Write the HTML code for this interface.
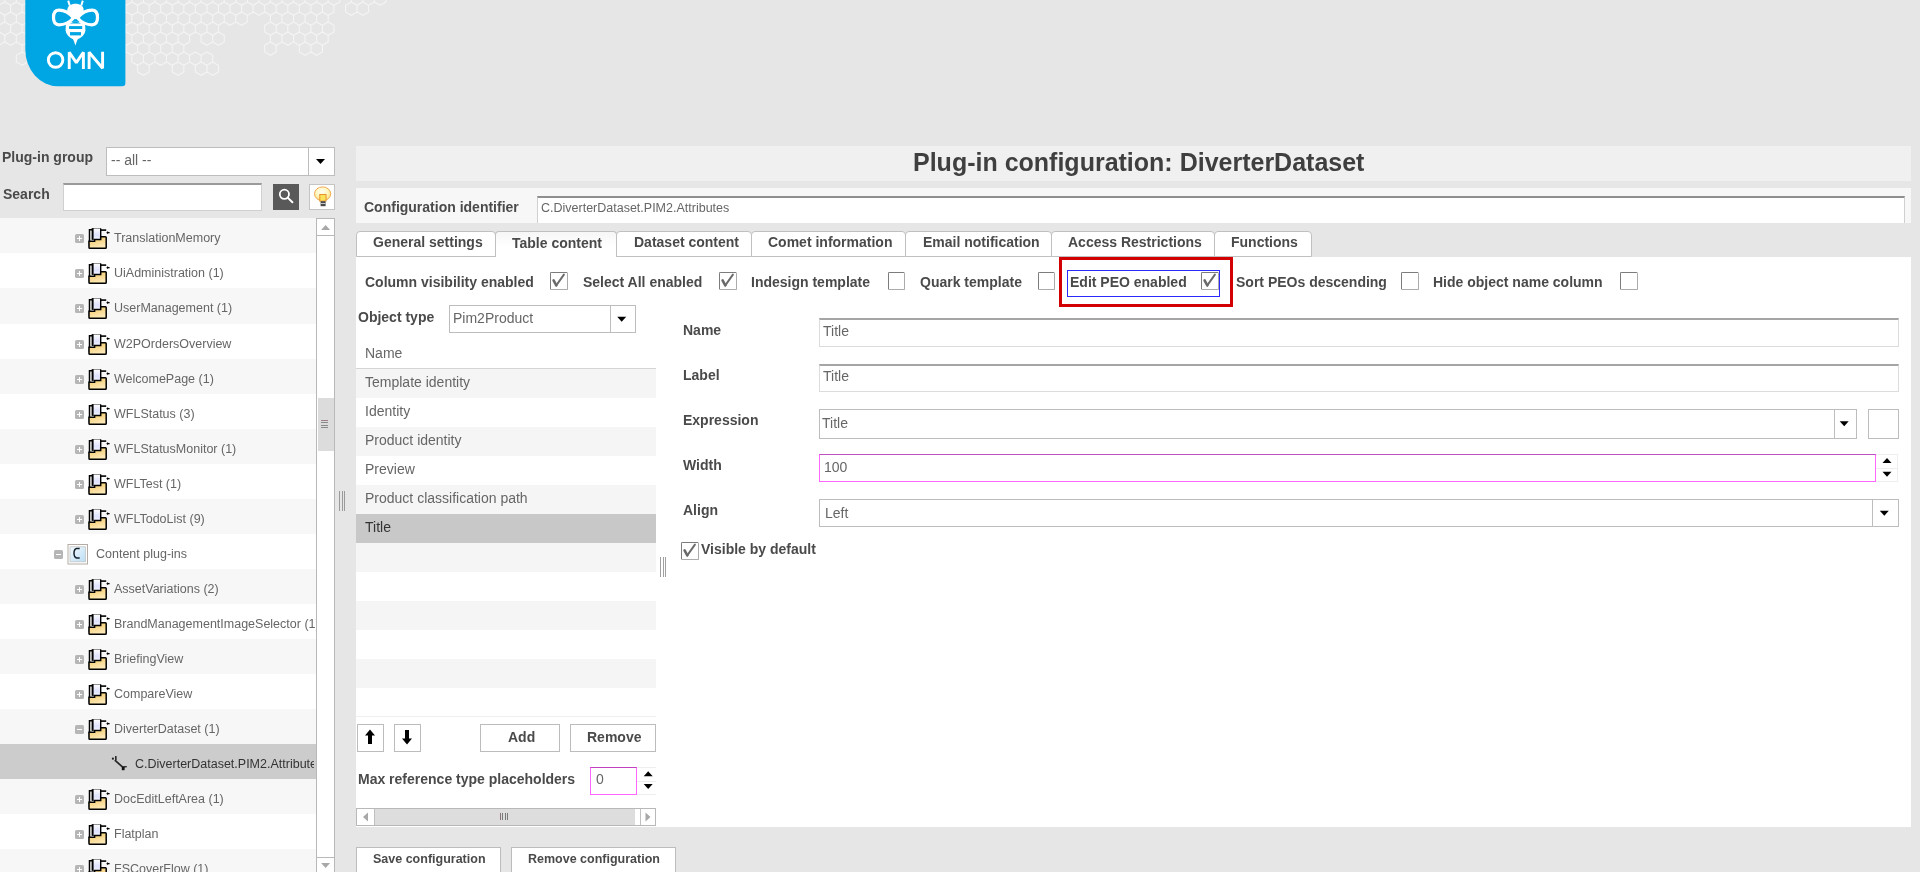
<!DOCTYPE html>
<html><head><meta charset="utf-8"><title>Plug-in configuration</title>
<style>
html,body{margin:0;padding:0;}
body{width:1920px;height:872px;overflow:hidden;position:relative;background:#e6e6e6;font-family:"Liberation Sans",sans-serif;-webkit-font-smoothing:antialiased;}
.a{position:absolute;box-sizing:border-box;}
.t{position:absolute;white-space:nowrap;will-change:transform;}
svg{position:absolute;}
</style></head><body>
<svg style="left:0;top:0" width="400" height="90" viewBox="0 0 400 90"><path d="M-1.00,-8.07 L4.77,-4.74 L4.77,1.93 L-1.00,5.27 L-6.78,1.93 L-6.78,-4.74Z M10.55,-8.07 L16.32,-4.74 L16.32,1.93 L10.55,5.27 L4.77,1.93 L4.77,-4.74Z M22.10,-8.07 L27.87,-4.74 L27.87,1.93 L22.10,5.27 L16.32,1.93 L16.32,-4.74Z M33.65,-8.07 L39.42,-4.74 L39.42,1.93 L33.65,5.27 L27.87,1.93 L27.87,-4.74Z M45.20,-8.07 L50.97,-4.74 L50.97,1.93 L45.20,5.27 L39.42,1.93 L39.42,-4.74Z M56.75,-8.07 L62.52,-4.74 L62.52,1.93 L56.75,5.27 L50.97,1.93 L50.97,-4.74Z M68.30,-8.07 L74.07,-4.74 L74.07,1.93 L68.30,5.27 L62.52,1.93 L62.52,-4.74Z M79.85,-8.07 L85.62,-4.74 L85.62,1.93 L79.85,5.27 L74.07,1.93 L74.07,-4.74Z M91.40,-8.07 L97.17,-4.74 L97.17,1.93 L91.40,5.27 L85.62,1.93 L85.62,-4.74Z M102.95,-8.07 L108.72,-4.74 L108.72,1.93 L102.95,5.27 L97.17,1.93 L97.17,-4.74Z M114.50,-8.07 L120.28,-4.74 L120.28,1.93 L114.50,5.27 L108.72,1.93 L108.72,-4.74Z M126.05,-8.07 L131.82,-4.74 L131.82,1.93 L126.05,5.27 L120.27,1.93 L120.27,-4.74Z M137.60,-8.07 L143.38,-4.74 L143.38,1.93 L137.60,5.27 L131.82,1.93 L131.82,-4.74Z M149.15,-8.07 L154.93,-4.74 L154.93,1.93 L149.15,5.27 L143.38,1.93 L143.38,-4.74Z M160.70,-8.07 L166.47,-4.74 L166.47,1.93 L160.70,5.27 L154.92,1.93 L154.92,-4.74Z M172.25,-8.07 L178.03,-4.74 L178.03,1.93 L172.25,5.27 L166.47,1.93 L166.47,-4.74Z M183.80,-8.07 L189.58,-4.74 L189.58,1.93 L183.80,5.27 L178.03,1.93 L178.03,-4.74Z M195.35,-8.07 L201.12,-4.74 L201.12,1.93 L195.35,5.27 L189.57,1.93 L189.57,-4.74Z M206.90,-8.07 L212.68,-4.74 L212.68,1.93 L206.90,5.27 L201.12,1.93 L201.12,-4.74Z M218.45,-8.07 L224.22,-4.74 L224.22,1.93 L218.45,5.27 L212.67,1.93 L212.67,-4.74Z M230.00,-8.07 L235.78,-4.74 L235.78,1.93 L230.00,5.27 L224.22,1.93 L224.22,-4.74Z M241.55,-8.07 L247.33,-4.74 L247.33,1.93 L241.55,5.27 L235.78,1.93 L235.78,-4.74Z M253.10,-8.07 L258.88,-4.74 L258.88,1.93 L253.10,5.27 L247.32,1.93 L247.32,-4.74Z M264.65,-8.07 L270.42,-4.74 L270.42,1.93 L264.65,5.27 L258.88,1.93 L258.88,-4.74Z M276.20,-8.07 L281.98,-4.74 L281.98,1.93 L276.20,5.27 L270.43,1.93 L270.43,-4.74Z M287.75,-8.07 L293.52,-4.74 L293.52,1.93 L287.75,5.27 L281.98,1.93 L281.98,-4.74Z M299.30,-8.07 L305.07,-4.74 L305.07,1.93 L299.30,5.27 L293.53,1.93 L293.53,-4.74Z M310.85,-8.07 L316.62,-4.74 L316.62,1.93 L310.85,5.27 L305.08,1.93 L305.08,-4.74Z M322.40,-8.07 L328.17,-4.74 L328.17,1.93 L322.40,5.27 L316.62,1.93 L316.62,-4.74Z M333.95,-8.07 L339.73,-4.74 L339.73,1.93 L333.95,5.27 L328.18,1.93 L328.18,-4.74Z M357.05,-8.07 L362.82,-4.74 L362.82,1.93 L357.05,5.27 L351.28,1.93 L351.28,-4.74Z M368.60,-8.07 L374.38,-4.74 L374.38,1.93 L368.60,5.27 L362.83,1.93 L362.83,-4.74Z M380.15,-8.07 L385.92,-4.74 L385.92,1.93 L380.15,5.27 L374.38,1.93 L374.38,-4.74Z M4.80,1.93 L10.57,5.26 L10.57,11.93 L4.80,15.27 L-0.98,11.93 L-0.98,5.26Z M16.35,1.93 L22.12,5.26 L22.12,11.93 L16.35,15.27 L10.57,11.93 L10.57,5.26Z M27.90,1.93 L33.68,5.26 L33.68,11.93 L27.90,15.27 L22.13,11.93 L22.13,5.26Z M39.45,1.93 L45.23,5.26 L45.23,11.93 L39.45,15.27 L33.68,11.93 L33.68,5.26Z M51.00,1.93 L56.77,5.26 L56.77,11.93 L51.00,15.27 L45.23,11.93 L45.23,5.26Z M62.55,1.93 L68.33,5.26 L68.33,11.93 L62.55,15.27 L56.77,11.93 L56.77,5.26Z M74.10,1.93 L79.88,5.26 L79.88,11.93 L74.10,15.27 L68.32,11.93 L68.32,5.26Z M85.65,1.93 L91.43,5.26 L91.43,11.93 L85.65,15.27 L79.88,11.93 L79.88,5.26Z M97.20,1.93 L102.98,5.26 L102.98,11.93 L97.20,15.27 L91.42,11.93 L91.42,5.26Z M108.75,1.93 L114.53,5.26 L114.53,11.93 L108.75,15.27 L102.97,11.93 L102.97,5.26Z M120.30,1.93 L126.08,5.26 L126.08,11.93 L120.30,15.27 L114.53,11.93 L114.53,5.26Z M131.85,1.93 L137.62,5.26 L137.62,11.93 L131.85,15.27 L126.07,11.93 L126.07,5.26Z M143.40,1.93 L149.18,5.26 L149.18,11.93 L143.40,15.27 L137.62,11.93 L137.62,5.26Z M154.95,1.93 L160.73,5.26 L160.73,11.93 L154.95,15.27 L149.18,11.93 L149.18,5.26Z M166.50,1.93 L172.28,5.26 L172.28,11.93 L166.50,15.27 L160.72,11.93 L160.72,5.26Z M178.05,1.93 L183.83,5.26 L183.83,11.93 L178.05,15.27 L172.28,11.93 L172.28,5.26Z M189.60,1.93 L195.38,5.26 L195.38,11.93 L189.60,15.27 L183.83,11.93 L183.83,5.26Z M201.15,1.93 L206.93,5.26 L206.93,11.93 L201.15,15.27 L195.38,11.93 L195.38,5.26Z M212.70,1.93 L218.48,5.26 L218.48,11.93 L212.70,15.27 L206.93,11.93 L206.93,5.26Z M224.25,1.93 L230.03,5.26 L230.03,11.93 L224.25,15.27 L218.47,11.93 L218.47,5.26Z M235.80,1.93 L241.58,5.26 L241.58,11.93 L235.80,15.27 L230.03,11.93 L230.03,5.26Z M247.35,1.93 L253.13,5.26 L253.13,11.93 L247.35,15.27 L241.58,11.93 L241.58,5.26Z M258.90,1.93 L264.67,5.26 L264.67,11.93 L258.90,15.27 L253.12,11.93 L253.12,5.26Z M270.45,1.93 L276.23,5.26 L276.23,11.93 L270.45,15.27 L264.68,11.93 L264.68,5.26Z M282.00,1.93 L287.77,5.26 L287.77,11.93 L282.00,15.27 L276.23,11.93 L276.23,5.26Z M293.55,1.93 L299.32,5.26 L299.32,11.93 L293.55,15.27 L287.78,11.93 L287.78,5.26Z M305.10,1.93 L310.88,5.26 L310.88,11.93 L305.10,15.27 L299.33,11.93 L299.33,5.26Z M316.65,1.93 L322.42,5.26 L322.42,11.93 L316.65,15.27 L310.88,11.93 L310.88,5.26Z M328.20,1.93 L333.98,5.26 L333.98,11.93 L328.20,15.27 L322.43,11.93 L322.43,5.26Z M351.30,1.93 L357.07,5.26 L357.07,11.93 L351.30,15.27 L345.53,11.93 L345.53,5.26Z M362.85,1.93 L368.62,5.26 L368.62,11.93 L362.85,15.27 L357.08,11.93 L357.08,5.26Z M-1.00,11.93 L4.77,15.27 L4.77,21.94 L-1.00,25.27 L-6.78,21.94 L-6.78,15.27Z M10.55,11.93 L16.32,15.27 L16.32,21.94 L10.55,25.27 L4.77,21.94 L4.77,15.27Z M22.10,11.93 L27.87,15.27 L27.87,21.94 L22.10,25.27 L16.32,21.94 L16.32,15.27Z M33.65,11.93 L39.42,15.27 L39.42,21.94 L33.65,25.27 L27.87,21.94 L27.87,15.27Z M45.20,11.93 L50.97,15.27 L50.97,21.94 L45.20,25.27 L39.42,21.94 L39.42,15.27Z M56.75,11.93 L62.52,15.27 L62.52,21.94 L56.75,25.27 L50.97,21.94 L50.97,15.27Z M68.30,11.93 L74.07,15.27 L74.07,21.94 L68.30,25.27 L62.52,21.94 L62.52,15.27Z M79.85,11.93 L85.62,15.27 L85.62,21.94 L79.85,25.27 L74.07,21.94 L74.07,15.27Z M91.40,11.93 L97.17,15.27 L97.17,21.94 L91.40,25.27 L85.62,21.94 L85.62,15.27Z M102.95,11.93 L108.72,15.27 L108.72,21.94 L102.95,25.27 L97.17,21.94 L97.17,15.27Z M114.50,11.93 L120.28,15.27 L120.28,21.94 L114.50,25.27 L108.72,21.94 L108.72,15.27Z M126.05,11.93 L131.82,15.27 L131.82,21.94 L126.05,25.27 L120.27,21.94 L120.27,15.27Z M137.60,11.93 L143.38,15.27 L143.38,21.94 L137.60,25.27 L131.82,21.94 L131.82,15.27Z M149.15,11.93 L154.93,15.27 L154.93,21.94 L149.15,25.27 L143.38,21.94 L143.38,15.27Z M160.70,11.93 L166.47,15.27 L166.47,21.94 L160.70,25.27 L154.92,21.94 L154.92,15.27Z M172.25,11.93 L178.03,15.27 L178.03,21.94 L172.25,25.27 L166.47,21.94 L166.47,15.27Z M183.80,11.93 L189.58,15.27 L189.58,21.94 L183.80,25.27 L178.03,21.94 L178.03,15.27Z M195.35,11.93 L201.12,15.27 L201.12,21.94 L195.35,25.27 L189.57,21.94 L189.57,15.27Z M206.90,11.93 L212.68,15.27 L212.68,21.94 L206.90,25.27 L201.12,21.94 L201.12,15.27Z M218.45,11.93 L224.22,15.27 L224.22,21.94 L218.45,25.27 L212.67,21.94 L212.67,15.27Z M230.00,11.93 L235.78,15.27 L235.78,21.94 L230.00,25.27 L224.22,21.94 L224.22,15.27Z M241.55,11.93 L247.33,15.27 L247.33,21.94 L241.55,25.27 L235.78,21.94 L235.78,15.27Z M276.20,11.93 L281.98,15.27 L281.98,21.94 L276.20,25.27 L270.43,21.94 L270.43,15.27Z M287.75,11.93 L293.52,15.27 L293.52,21.94 L287.75,25.27 L281.98,21.94 L281.98,15.27Z M299.30,11.93 L305.07,15.27 L305.07,21.94 L299.30,25.27 L293.53,21.94 L293.53,15.27Z M310.85,11.93 L316.62,15.27 L316.62,21.94 L310.85,25.27 L305.08,21.94 L305.08,15.27Z M322.40,11.93 L328.17,15.27 L328.17,21.94 L322.40,25.27 L316.62,21.94 L316.62,15.27Z M4.80,21.93 L10.57,25.27 L10.57,31.94 L4.80,35.27 L-0.98,31.94 L-0.98,25.27Z M16.35,21.93 L22.12,25.27 L22.12,31.94 L16.35,35.27 L10.57,31.94 L10.57,25.27Z M27.90,21.93 L33.68,25.27 L33.68,31.94 L27.90,35.27 L22.13,31.94 L22.13,25.27Z M39.45,21.93 L45.23,25.27 L45.23,31.94 L39.45,35.27 L33.68,31.94 L33.68,25.27Z M51.00,21.93 L56.77,25.27 L56.77,31.94 L51.00,35.27 L45.23,31.94 L45.23,25.27Z M62.55,21.93 L68.33,25.27 L68.33,31.94 L62.55,35.27 L56.77,31.94 L56.77,25.27Z M74.10,21.93 L79.88,25.27 L79.88,31.94 L74.10,35.27 L68.32,31.94 L68.32,25.27Z M85.65,21.93 L91.43,25.27 L91.43,31.94 L85.65,35.27 L79.88,31.94 L79.88,25.27Z M97.20,21.93 L102.98,25.27 L102.98,31.94 L97.20,35.27 L91.42,31.94 L91.42,25.27Z M108.75,21.93 L114.53,25.27 L114.53,31.94 L108.75,35.27 L102.97,31.94 L102.97,25.27Z M120.30,21.93 L126.08,25.27 L126.08,31.94 L120.30,35.27 L114.53,31.94 L114.53,25.27Z M131.85,21.93 L137.62,25.27 L137.62,31.94 L131.85,35.27 L126.07,31.94 L126.07,25.27Z M143.40,21.93 L149.18,25.27 L149.18,31.94 L143.40,35.27 L137.62,31.94 L137.62,25.27Z M154.95,21.93 L160.73,25.27 L160.73,31.94 L154.95,35.27 L149.18,31.94 L149.18,25.27Z M166.50,21.93 L172.28,25.27 L172.28,31.94 L166.50,35.27 L160.72,31.94 L160.72,25.27Z M178.05,21.93 L183.83,25.27 L183.83,31.94 L178.05,35.27 L172.28,31.94 L172.28,25.27Z M189.60,21.93 L195.38,25.27 L195.38,31.94 L189.60,35.27 L183.83,31.94 L183.83,25.27Z M201.15,21.93 L206.93,25.27 L206.93,31.94 L201.15,35.27 L195.38,31.94 L195.38,25.27Z M212.70,21.93 L218.48,25.27 L218.48,31.94 L212.70,35.27 L206.93,31.94 L206.93,25.27Z M270.45,21.93 L276.23,25.27 L276.23,31.94 L270.45,35.27 L264.68,31.94 L264.68,25.27Z M282.00,21.93 L287.77,25.27 L287.77,31.94 L282.00,35.27 L276.23,31.94 L276.23,25.27Z M293.55,21.93 L299.32,25.27 L299.32,31.94 L293.55,35.27 L287.78,31.94 L287.78,25.27Z M305.10,21.93 L310.88,25.27 L310.88,31.94 L305.10,35.27 L299.33,31.94 L299.33,25.27Z M316.65,21.93 L322.42,25.27 L322.42,31.94 L316.65,35.27 L310.88,31.94 L310.88,25.27Z M328.20,21.93 L333.98,25.27 L333.98,31.94 L328.20,35.27 L322.43,31.94 L322.43,25.27Z M-1.00,31.93 L4.77,35.27 L4.77,41.94 L-1.00,45.27 L-6.78,41.94 L-6.78,35.27Z M10.55,31.93 L16.32,35.27 L16.32,41.94 L10.55,45.27 L4.77,41.94 L4.77,35.27Z M22.10,31.93 L27.87,35.27 L27.87,41.94 L22.10,45.27 L16.32,41.94 L16.32,35.27Z M33.65,31.93 L39.42,35.27 L39.42,41.94 L33.65,45.27 L27.87,41.94 L27.87,35.27Z M45.20,31.93 L50.97,35.27 L50.97,41.94 L45.20,45.27 L39.42,41.94 L39.42,35.27Z M56.75,31.93 L62.52,35.27 L62.52,41.94 L56.75,45.27 L50.97,41.94 L50.97,35.27Z M68.30,31.93 L74.07,35.27 L74.07,41.94 L68.30,45.27 L62.52,41.94 L62.52,35.27Z M79.85,31.93 L85.62,35.27 L85.62,41.94 L79.85,45.27 L74.07,41.94 L74.07,35.27Z M91.40,31.93 L97.17,35.27 L97.17,41.94 L91.40,45.27 L85.62,41.94 L85.62,35.27Z M102.95,31.93 L108.72,35.27 L108.72,41.94 L102.95,45.27 L97.17,41.94 L97.17,35.27Z M114.50,31.93 L120.28,35.27 L120.28,41.94 L114.50,45.27 L108.72,41.94 L108.72,35.27Z M126.05,31.93 L131.82,35.27 L131.82,41.94 L126.05,45.27 L120.27,41.94 L120.27,35.27Z M137.60,31.93 L143.38,35.27 L143.38,41.94 L137.60,45.27 L131.82,41.94 L131.82,35.27Z M149.15,31.93 L154.93,35.27 L154.93,41.94 L149.15,45.27 L143.38,41.94 L143.38,35.27Z M160.70,31.93 L166.47,35.27 L166.47,41.94 L160.70,45.27 L154.92,41.94 L154.92,35.27Z M172.25,31.93 L178.03,35.27 L178.03,41.94 L172.25,45.27 L166.47,41.94 L166.47,35.27Z M183.80,31.93 L189.58,35.27 L189.58,41.94 L183.80,45.27 L178.03,41.94 L178.03,35.27Z M206.90,31.93 L212.68,35.27 L212.68,41.94 L206.90,45.27 L201.12,41.94 L201.12,35.27Z M218.45,31.93 L224.22,35.27 L224.22,41.94 L218.45,45.27 L212.67,41.94 L212.67,35.27Z M276.20,31.93 L281.98,35.27 L281.98,41.94 L276.20,45.27 L270.43,41.94 L270.43,35.27Z M287.75,31.93 L293.52,35.27 L293.52,41.94 L287.75,45.27 L281.98,41.94 L281.98,35.27Z M299.30,31.93 L305.07,35.27 L305.07,41.94 L299.30,45.27 L293.53,41.94 L293.53,35.27Z M310.85,31.93 L316.62,35.27 L316.62,41.94 L310.85,45.27 L305.08,41.94 L305.08,35.27Z M322.40,31.93 L328.17,35.27 L328.17,41.94 L322.40,45.27 L316.62,41.94 L316.62,35.27Z M27.90,41.93 L33.68,45.27 L33.68,51.94 L27.90,55.27 L22.13,51.94 L22.13,45.27Z M39.45,41.93 L45.23,45.27 L45.23,51.94 L39.45,55.27 L33.68,51.94 L33.68,45.27Z M51.00,41.93 L56.77,45.27 L56.77,51.94 L51.00,55.27 L45.23,51.94 L45.23,45.27Z M62.55,41.93 L68.33,45.27 L68.33,51.94 L62.55,55.27 L56.77,51.94 L56.77,45.27Z M74.10,41.93 L79.88,45.27 L79.88,51.94 L74.10,55.27 L68.32,51.94 L68.32,45.27Z M85.65,41.93 L91.43,45.27 L91.43,51.94 L85.65,55.27 L79.88,51.94 L79.88,45.27Z M97.20,41.93 L102.98,45.27 L102.98,51.94 L97.20,55.27 L91.42,51.94 L91.42,45.27Z M108.75,41.93 L114.53,45.27 L114.53,51.94 L108.75,55.27 L102.97,51.94 L102.97,45.27Z M120.30,41.93 L126.08,45.27 L126.08,51.94 L120.30,55.27 L114.53,51.94 L114.53,45.27Z M131.85,41.93 L137.62,45.27 L137.62,51.94 L131.85,55.27 L126.07,51.94 L126.07,45.27Z M143.40,41.93 L149.18,45.27 L149.18,51.94 L143.40,55.27 L137.62,51.94 L137.62,45.27Z M154.95,41.93 L160.73,45.27 L160.73,51.94 L154.95,55.27 L149.18,51.94 L149.18,45.27Z M166.50,41.93 L172.28,45.27 L172.28,51.94 L166.50,55.27 L160.72,51.94 L160.72,45.27Z M178.05,41.93 L183.83,45.27 L183.83,51.94 L178.05,55.27 L172.28,51.94 L172.28,45.27Z M270.45,41.93 L276.23,45.27 L276.23,51.94 L270.45,55.27 L264.68,51.94 L264.68,45.27Z M305.10,41.93 L310.88,45.27 L310.88,51.94 L305.10,55.27 L299.33,51.94 L299.33,45.27Z M316.65,41.93 L322.42,45.27 L322.42,51.94 L316.65,55.27 L310.88,51.94 L310.88,45.27Z M22.10,51.93 L27.87,55.27 L27.87,61.94 L22.10,65.27 L16.32,61.94 L16.32,55.27Z M137.60,51.93 L143.38,55.27 L143.38,61.94 L137.60,65.27 L131.82,61.94 L131.82,55.27Z M149.15,51.93 L154.93,55.27 L154.93,61.94 L149.15,65.27 L143.38,61.94 L143.38,55.27Z M160.70,51.93 L166.47,55.27 L166.47,61.94 L160.70,65.27 L154.92,61.94 L154.92,55.27Z M172.25,51.93 L178.03,55.27 L178.03,61.94 L172.25,65.27 L166.47,61.94 L166.47,55.27Z M183.80,51.93 L189.58,55.27 L189.58,61.94 L183.80,65.27 L178.03,61.94 L178.03,55.27Z M195.35,51.93 L201.12,55.27 L201.12,61.94 L195.35,65.27 L189.57,61.94 L189.57,55.27Z M206.90,51.93 L212.68,55.27 L212.68,61.94 L206.90,65.27 L201.12,61.94 L201.12,55.27Z M143.40,61.93 L149.18,65.27 L149.18,71.93 L143.40,75.27 L137.62,71.93 L137.62,65.27Z M178.05,61.93 L183.83,65.27 L183.83,71.93 L178.05,75.27 L172.28,71.93 L172.28,65.27Z M201.15,61.93 L206.93,65.27 L206.93,71.93 L201.15,75.27 L195.38,71.93 L195.38,65.27Z M212.70,61.93 L218.48,65.27 L218.48,71.93 L212.70,75.27 L206.93,71.93 L206.93,65.27Z" fill="none" stroke="#f4f4f4" stroke-width="1.1"/></svg>
<svg style="left:25px;top:0" width="101" height="88" viewBox="0 0 101 88"><path d="M0.3,0 H100.4 V83 Q100.4,86.3 97.2,86.3 H33 A32.7,36.8 0 0 1 0.3,49.5 Z" fill="#00a6e3"/><g fill="none" stroke="#fff" stroke-width="3.2"><path d="M48.5,18 C44,12.5 39,10.2 34,10.2 C30,10.2 28.5,13.5 28.5,17.5 C28.5,21.5 30,24.8 34,24.8 C39,24.8 44,23 48.5,18 Z"/><path d="M52.5,18 C57,12.5 62,10.2 67,10.2 C71,10.2 72.5,13.5 72.5,17.5 C72.5,21.5 71,24.8 67,24.8 C62,24.8 57,23 52.5,18 Z"/></g><path d="M42.3,10.5 C42.3,5.8 46,3.8 50.5,3.8 C55,3.8 58.7,5.8 58.7,10.5 C58.7,13.5 55,16.5 50.5,19.2 C46,16.5 42.3,13.5 42.3,10.5 Z" fill="#fff"/><path d="M44.7,5.5 L43.2,0.6 M56.3,5.5 L57.8,0.6" stroke="#fff" stroke-width="2"/><path d="M40.9,23 Q50.5,20.5 60.1,23 L60.4,30.5 Q60,36.5 50.4,40.5 Q41,36.5 40.6,30.5 Z" fill="#fff"/><path d="M45,23.6 Q50.5,19.8 56,23.6 Z" fill="#00a6e3"/><rect x="44.1" y="26.1" width="13.1" height="2.9" fill="#00a6e3"/><rect x="45" y="32.1" width="11" height="3.3" fill="#00a6e3"/><path d="M48.1,39 L52.7,39 L50.4,45.5 Z" fill="#fff"/><g fill="none" stroke="#fff" stroke-width="2.9"><ellipse cx="30.6" cy="60" rx="7.25" ry="7.3"/><path d="M44.25,69 V52.3 L51.3,62.6 L58.4,52.3 V69" stroke-linejoin="bevel"/><path d="M64.1,69 V52.3 L77.6,68.2 V51.8" stroke-linejoin="bevel"/></g></svg>
<div class="t" style="left:2.20px;top:150.15px;font-size:14px;line-height:14px;font-weight:bold;color:#4a4a4a;">Plug-in group</div>
<div class="a" style="left:106px;top:147px;width:229px;height:29px;background:#fff;border:1px solid #bdbdbd;"></div>
<div class="a" style="left:308px;top:147px;width:1px;height:29px;background:#bdbdbd;"></div>
<svg style="left:315px;top:158px" width="12" height="8"><polygon points="1.00,1.00 10.00,1.00 5.50,6.00" fill="#000"/></svg>
<div class="t" style="left:111.20px;top:153.35px;font-size:14px;line-height:14px;color:#666;">-- all --</div>
<div class="t" style="left:2.70px;top:186.95px;font-size:14px;line-height:14px;font-weight:bold;color:#4a4a4a;">Search</div>
<div class="a" style="left:63px;top:183px;width:199px;height:28px;background:#fff;border:1px solid #d0d0d0;border-top:2px solid #9a9a9a;"></div>
<div class="a" style="left:273px;top:184px;width:26px;height:26px;background:#595959;"></div>
<svg style="left:272px;top:183px" width="27" height="27" viewBox="0 0 27 27"><circle cx="12.4" cy="11.3" r="4.6" fill="none" stroke="#fff" stroke-width="1.8"/><path d="M15.7,14.6 L20.4,19.3" stroke="#fff" stroke-width="2" stroke-linecap="round"/></svg>
<div class="a" style="left:309px;top:184px;width:26px;height:26px;background:#fff;border:1px solid #c4c4c4;"></div>
<svg style="left:309px;top:183px" width="26" height="27" viewBox="0 0 26 27"><defs><radialGradient id="bg1" cx="0.45" cy="0.35" r="0.65"><stop offset="0" stop-color="#fffff4"/><stop offset="0.55" stop-color="#fff6c0"/><stop offset="1" stop-color="#fbe37a"/></radialGradient></defs><ellipse cx="13.6" cy="10.8" rx="8.1" ry="6.9" fill="url(#bg1)" stroke="#f0a850" stroke-width="1"/><rect x="10.8" y="11.5" width="6.2" height="6.6" fill="#f9e35a" stroke="#e8902c" stroke-width="1"/><rect x="11.6" y="18.2" width="5" height="5" fill="#4a4a4a"/><rect x="11.6" y="20" width="5" height="1" fill="#c8c8c8"/></svg>
<div class="a" style="left:0px;top:218px;width:316px;height:35px;background:#f7f7f7;"></div>
<div class="a" style="left:75px;top:234px;width:9px;height:9px;background:#b6b6b6;border-radius:1.5px;"></div>
<div class="a" style="left:77px;top:238px;width:5px;height:1px;background:#fff;"></div>
<div class="a" style="left:79px;top:236px;width:1px;height:5px;background:#fff;"></div>
<svg style="left:88px;top:227px" width="23" height="23" viewBox="0 0 23 23"><defs><linearGradient id="fg0" x1="0" y1="0" x2="0.4" y2="1"><stop offset="0" stop-color="#f0c45c"/><stop offset="1" stop-color="#fde9b8"/></linearGradient><linearGradient id="pg0" x1="0" y1="0" x2="0" y2="1"><stop offset="0" stop-color="#fff"/><stop offset="0.6" stop-color="#dfe2ff"/><stop offset="1" stop-color="#f4f4ff"/></linearGradient></defs><path d="M1.5,19 V2.8 H4.5" fill="#fff" stroke="#000" stroke-width="1.5"/><rect x="4.6" y="1.4" width="8" height="11.2" fill="url(#pg0)" stroke="#777" stroke-width="0.8"/><path d="M4.6,1.2 V12.8" stroke="#000" stroke-width="2"/><path d="M12.7,1.6 V12.6" stroke="#000" stroke-width="1.4"/><path d="M12.3,3.1 H18.2" stroke="#000" stroke-width="1.6"/><path d="M18.6,5.6 L21.6,5.6 M19.6,4.4 L19.6,6.8" stroke="#000" stroke-width="1.1"/><path d="M1,14.3 H6.6 V12.6 H12.7 V9.8 H17.4 Q18.2,9.8 18.2,10.6 V20.4 Q18.2,21.3 17.4,21.3 H1.8 Q1,21.3 1,20.4 Z" fill="url(#fg0)" stroke="#000" stroke-width="1.5"/></svg>
<div class="t" style="left:114.00px;top:232.42px;font-size:12.5px;line-height:12.5px;color:#666;">TranslationMemory</div>
<div class="a" style="left:0px;top:253px;width:316px;height:35px;background:#ffffff;"></div>
<div class="a" style="left:75px;top:269px;width:9px;height:9px;background:#b6b6b6;border-radius:1.5px;"></div>
<div class="a" style="left:77px;top:273px;width:5px;height:1px;background:#fff;"></div>
<div class="a" style="left:79px;top:271px;width:1px;height:5px;background:#fff;"></div>
<svg style="left:88px;top:262px" width="23" height="23" viewBox="0 0 23 23"><defs><linearGradient id="fg1" x1="0" y1="0" x2="0.4" y2="1"><stop offset="0" stop-color="#f0c45c"/><stop offset="1" stop-color="#fde9b8"/></linearGradient><linearGradient id="pg1" x1="0" y1="0" x2="0" y2="1"><stop offset="0" stop-color="#fff"/><stop offset="0.6" stop-color="#dfe2ff"/><stop offset="1" stop-color="#f4f4ff"/></linearGradient></defs><path d="M1.5,19 V2.8 H4.5" fill="#fff" stroke="#000" stroke-width="1.5"/><rect x="4.6" y="1.4" width="8" height="11.2" fill="url(#pg1)" stroke="#777" stroke-width="0.8"/><path d="M4.6,1.2 V12.8" stroke="#000" stroke-width="2"/><path d="M12.7,1.6 V12.6" stroke="#000" stroke-width="1.4"/><path d="M12.3,3.1 H18.2" stroke="#000" stroke-width="1.6"/><path d="M18.6,5.6 L21.6,5.6 M19.6,4.4 L19.6,6.8" stroke="#000" stroke-width="1.1"/><path d="M1,14.3 H6.6 V12.6 H12.7 V9.8 H17.4 Q18.2,9.8 18.2,10.6 V20.4 Q18.2,21.3 17.4,21.3 H1.8 Q1,21.3 1,20.4 Z" fill="url(#fg1)" stroke="#000" stroke-width="1.5"/></svg>
<div class="t" style="left:114.00px;top:267.42px;font-size:12.5px;line-height:12.5px;color:#666;">UiAdministration (1)</div>
<div class="a" style="left:0px;top:288px;width:316px;height:36px;background:#f7f7f7;"></div>
<div class="a" style="left:75px;top:304px;width:9px;height:9px;background:#b6b6b6;border-radius:1.5px;"></div>
<div class="a" style="left:77px;top:308px;width:5px;height:1px;background:#fff;"></div>
<div class="a" style="left:79px;top:306px;width:1px;height:5px;background:#fff;"></div>
<svg style="left:88px;top:297px" width="23" height="23" viewBox="0 0 23 23"><defs><linearGradient id="fg2" x1="0" y1="0" x2="0.4" y2="1"><stop offset="0" stop-color="#f0c45c"/><stop offset="1" stop-color="#fde9b8"/></linearGradient><linearGradient id="pg2" x1="0" y1="0" x2="0" y2="1"><stop offset="0" stop-color="#fff"/><stop offset="0.6" stop-color="#dfe2ff"/><stop offset="1" stop-color="#f4f4ff"/></linearGradient></defs><path d="M1.5,19 V2.8 H4.5" fill="#fff" stroke="#000" stroke-width="1.5"/><rect x="4.6" y="1.4" width="8" height="11.2" fill="url(#pg2)" stroke="#777" stroke-width="0.8"/><path d="M4.6,1.2 V12.8" stroke="#000" stroke-width="2"/><path d="M12.7,1.6 V12.6" stroke="#000" stroke-width="1.4"/><path d="M12.3,3.1 H18.2" stroke="#000" stroke-width="1.6"/><path d="M18.6,5.6 L21.6,5.6 M19.6,4.4 L19.6,6.8" stroke="#000" stroke-width="1.1"/><path d="M1,14.3 H6.6 V12.6 H12.7 V9.8 H17.4 Q18.2,9.8 18.2,10.6 V20.4 Q18.2,21.3 17.4,21.3 H1.8 Q1,21.3 1,20.4 Z" fill="url(#fg2)" stroke="#000" stroke-width="1.5"/></svg>
<div class="t" style="left:114.00px;top:302.42px;font-size:12.5px;line-height:12.5px;color:#666;">UserManagement (1)</div>
<div class="a" style="left:0px;top:324px;width:316px;height:35px;background:#ffffff;"></div>
<div class="a" style="left:75px;top:340px;width:9px;height:9px;background:#b6b6b6;border-radius:1.5px;"></div>
<div class="a" style="left:77px;top:344px;width:5px;height:1px;background:#fff;"></div>
<div class="a" style="left:79px;top:342px;width:1px;height:5px;background:#fff;"></div>
<svg style="left:88px;top:333px" width="23" height="23" viewBox="0 0 23 23"><defs><linearGradient id="fg3" x1="0" y1="0" x2="0.4" y2="1"><stop offset="0" stop-color="#f0c45c"/><stop offset="1" stop-color="#fde9b8"/></linearGradient><linearGradient id="pg3" x1="0" y1="0" x2="0" y2="1"><stop offset="0" stop-color="#fff"/><stop offset="0.6" stop-color="#dfe2ff"/><stop offset="1" stop-color="#f4f4ff"/></linearGradient></defs><path d="M1.5,19 V2.8 H4.5" fill="#fff" stroke="#000" stroke-width="1.5"/><rect x="4.6" y="1.4" width="8" height="11.2" fill="url(#pg3)" stroke="#777" stroke-width="0.8"/><path d="M4.6,1.2 V12.8" stroke="#000" stroke-width="2"/><path d="M12.7,1.6 V12.6" stroke="#000" stroke-width="1.4"/><path d="M12.3,3.1 H18.2" stroke="#000" stroke-width="1.6"/><path d="M18.6,5.6 L21.6,5.6 M19.6,4.4 L19.6,6.8" stroke="#000" stroke-width="1.1"/><path d="M1,14.3 H6.6 V12.6 H12.7 V9.8 H17.4 Q18.2,9.8 18.2,10.6 V20.4 Q18.2,21.3 17.4,21.3 H1.8 Q1,21.3 1,20.4 Z" fill="url(#fg3)" stroke="#000" stroke-width="1.5"/></svg>
<div class="t" style="left:114.00px;top:338.42px;font-size:12.5px;line-height:12.5px;color:#666;">W2POrdersOverview</div>
<div class="a" style="left:0px;top:359px;width:316px;height:35px;background:#f7f7f7;"></div>
<div class="a" style="left:75px;top:375px;width:9px;height:9px;background:#b6b6b6;border-radius:1.5px;"></div>
<div class="a" style="left:77px;top:379px;width:5px;height:1px;background:#fff;"></div>
<div class="a" style="left:79px;top:377px;width:1px;height:5px;background:#fff;"></div>
<svg style="left:88px;top:368px" width="23" height="23" viewBox="0 0 23 23"><defs><linearGradient id="fg4" x1="0" y1="0" x2="0.4" y2="1"><stop offset="0" stop-color="#f0c45c"/><stop offset="1" stop-color="#fde9b8"/></linearGradient><linearGradient id="pg4" x1="0" y1="0" x2="0" y2="1"><stop offset="0" stop-color="#fff"/><stop offset="0.6" stop-color="#dfe2ff"/><stop offset="1" stop-color="#f4f4ff"/></linearGradient></defs><path d="M1.5,19 V2.8 H4.5" fill="#fff" stroke="#000" stroke-width="1.5"/><rect x="4.6" y="1.4" width="8" height="11.2" fill="url(#pg4)" stroke="#777" stroke-width="0.8"/><path d="M4.6,1.2 V12.8" stroke="#000" stroke-width="2"/><path d="M12.7,1.6 V12.6" stroke="#000" stroke-width="1.4"/><path d="M12.3,3.1 H18.2" stroke="#000" stroke-width="1.6"/><path d="M18.6,5.6 L21.6,5.6 M19.6,4.4 L19.6,6.8" stroke="#000" stroke-width="1.1"/><path d="M1,14.3 H6.6 V12.6 H12.7 V9.8 H17.4 Q18.2,9.8 18.2,10.6 V20.4 Q18.2,21.3 17.4,21.3 H1.8 Q1,21.3 1,20.4 Z" fill="url(#fg4)" stroke="#000" stroke-width="1.5"/></svg>
<div class="t" style="left:114.00px;top:373.42px;font-size:12.5px;line-height:12.5px;color:#666;">WelcomePage (1)</div>
<div class="a" style="left:0px;top:394px;width:316px;height:35px;background:#ffffff;"></div>
<div class="a" style="left:75px;top:410px;width:9px;height:9px;background:#b6b6b6;border-radius:1.5px;"></div>
<div class="a" style="left:77px;top:414px;width:5px;height:1px;background:#fff;"></div>
<div class="a" style="left:79px;top:412px;width:1px;height:5px;background:#fff;"></div>
<svg style="left:88px;top:403px" width="23" height="23" viewBox="0 0 23 23"><defs><linearGradient id="fg5" x1="0" y1="0" x2="0.4" y2="1"><stop offset="0" stop-color="#f0c45c"/><stop offset="1" stop-color="#fde9b8"/></linearGradient><linearGradient id="pg5" x1="0" y1="0" x2="0" y2="1"><stop offset="0" stop-color="#fff"/><stop offset="0.6" stop-color="#dfe2ff"/><stop offset="1" stop-color="#f4f4ff"/></linearGradient></defs><path d="M1.5,19 V2.8 H4.5" fill="#fff" stroke="#000" stroke-width="1.5"/><rect x="4.6" y="1.4" width="8" height="11.2" fill="url(#pg5)" stroke="#777" stroke-width="0.8"/><path d="M4.6,1.2 V12.8" stroke="#000" stroke-width="2"/><path d="M12.7,1.6 V12.6" stroke="#000" stroke-width="1.4"/><path d="M12.3,3.1 H18.2" stroke="#000" stroke-width="1.6"/><path d="M18.6,5.6 L21.6,5.6 M19.6,4.4 L19.6,6.8" stroke="#000" stroke-width="1.1"/><path d="M1,14.3 H6.6 V12.6 H12.7 V9.8 H17.4 Q18.2,9.8 18.2,10.6 V20.4 Q18.2,21.3 17.4,21.3 H1.8 Q1,21.3 1,20.4 Z" fill="url(#fg5)" stroke="#000" stroke-width="1.5"/></svg>
<div class="t" style="left:114.00px;top:408.42px;font-size:12.5px;line-height:12.5px;color:#666;">WFLStatus (3)</div>
<div class="a" style="left:0px;top:429px;width:316px;height:35px;background:#f7f7f7;"></div>
<div class="a" style="left:75px;top:445px;width:9px;height:9px;background:#b6b6b6;border-radius:1.5px;"></div>
<div class="a" style="left:77px;top:449px;width:5px;height:1px;background:#fff;"></div>
<div class="a" style="left:79px;top:447px;width:1px;height:5px;background:#fff;"></div>
<svg style="left:88px;top:438px" width="23" height="23" viewBox="0 0 23 23"><defs><linearGradient id="fg6" x1="0" y1="0" x2="0.4" y2="1"><stop offset="0" stop-color="#f0c45c"/><stop offset="1" stop-color="#fde9b8"/></linearGradient><linearGradient id="pg6" x1="0" y1="0" x2="0" y2="1"><stop offset="0" stop-color="#fff"/><stop offset="0.6" stop-color="#dfe2ff"/><stop offset="1" stop-color="#f4f4ff"/></linearGradient></defs><path d="M1.5,19 V2.8 H4.5" fill="#fff" stroke="#000" stroke-width="1.5"/><rect x="4.6" y="1.4" width="8" height="11.2" fill="url(#pg6)" stroke="#777" stroke-width="0.8"/><path d="M4.6,1.2 V12.8" stroke="#000" stroke-width="2"/><path d="M12.7,1.6 V12.6" stroke="#000" stroke-width="1.4"/><path d="M12.3,3.1 H18.2" stroke="#000" stroke-width="1.6"/><path d="M18.6,5.6 L21.6,5.6 M19.6,4.4 L19.6,6.8" stroke="#000" stroke-width="1.1"/><path d="M1,14.3 H6.6 V12.6 H12.7 V9.8 H17.4 Q18.2,9.8 18.2,10.6 V20.4 Q18.2,21.3 17.4,21.3 H1.8 Q1,21.3 1,20.4 Z" fill="url(#fg6)" stroke="#000" stroke-width="1.5"/></svg>
<div class="t" style="left:114.00px;top:443.42px;font-size:12.5px;line-height:12.5px;color:#666;">WFLStatusMonitor (1)</div>
<div class="a" style="left:0px;top:464px;width:316px;height:35px;background:#ffffff;"></div>
<div class="a" style="left:75px;top:480px;width:9px;height:9px;background:#b6b6b6;border-radius:1.5px;"></div>
<div class="a" style="left:77px;top:484px;width:5px;height:1px;background:#fff;"></div>
<div class="a" style="left:79px;top:482px;width:1px;height:5px;background:#fff;"></div>
<svg style="left:88px;top:473px" width="23" height="23" viewBox="0 0 23 23"><defs><linearGradient id="fg7" x1="0" y1="0" x2="0.4" y2="1"><stop offset="0" stop-color="#f0c45c"/><stop offset="1" stop-color="#fde9b8"/></linearGradient><linearGradient id="pg7" x1="0" y1="0" x2="0" y2="1"><stop offset="0" stop-color="#fff"/><stop offset="0.6" stop-color="#dfe2ff"/><stop offset="1" stop-color="#f4f4ff"/></linearGradient></defs><path d="M1.5,19 V2.8 H4.5" fill="#fff" stroke="#000" stroke-width="1.5"/><rect x="4.6" y="1.4" width="8" height="11.2" fill="url(#pg7)" stroke="#777" stroke-width="0.8"/><path d="M4.6,1.2 V12.8" stroke="#000" stroke-width="2"/><path d="M12.7,1.6 V12.6" stroke="#000" stroke-width="1.4"/><path d="M12.3,3.1 H18.2" stroke="#000" stroke-width="1.6"/><path d="M18.6,5.6 L21.6,5.6 M19.6,4.4 L19.6,6.8" stroke="#000" stroke-width="1.1"/><path d="M1,14.3 H6.6 V12.6 H12.7 V9.8 H17.4 Q18.2,9.8 18.2,10.6 V20.4 Q18.2,21.3 17.4,21.3 H1.8 Q1,21.3 1,20.4 Z" fill="url(#fg7)" stroke="#000" stroke-width="1.5"/></svg>
<div class="t" style="left:114.00px;top:478.42px;font-size:12.5px;line-height:12.5px;color:#666;">WFLTest (1)</div>
<div class="a" style="left:0px;top:499px;width:316px;height:35px;background:#f7f7f7;"></div>
<div class="a" style="left:75px;top:515px;width:9px;height:9px;background:#b6b6b6;border-radius:1.5px;"></div>
<div class="a" style="left:77px;top:519px;width:5px;height:1px;background:#fff;"></div>
<div class="a" style="left:79px;top:517px;width:1px;height:5px;background:#fff;"></div>
<svg style="left:88px;top:508px" width="23" height="23" viewBox="0 0 23 23"><defs><linearGradient id="fg8" x1="0" y1="0" x2="0.4" y2="1"><stop offset="0" stop-color="#f0c45c"/><stop offset="1" stop-color="#fde9b8"/></linearGradient><linearGradient id="pg8" x1="0" y1="0" x2="0" y2="1"><stop offset="0" stop-color="#fff"/><stop offset="0.6" stop-color="#dfe2ff"/><stop offset="1" stop-color="#f4f4ff"/></linearGradient></defs><path d="M1.5,19 V2.8 H4.5" fill="#fff" stroke="#000" stroke-width="1.5"/><rect x="4.6" y="1.4" width="8" height="11.2" fill="url(#pg8)" stroke="#777" stroke-width="0.8"/><path d="M4.6,1.2 V12.8" stroke="#000" stroke-width="2"/><path d="M12.7,1.6 V12.6" stroke="#000" stroke-width="1.4"/><path d="M12.3,3.1 H18.2" stroke="#000" stroke-width="1.6"/><path d="M18.6,5.6 L21.6,5.6 M19.6,4.4 L19.6,6.8" stroke="#000" stroke-width="1.1"/><path d="M1,14.3 H6.6 V12.6 H12.7 V9.8 H17.4 Q18.2,9.8 18.2,10.6 V20.4 Q18.2,21.3 17.4,21.3 H1.8 Q1,21.3 1,20.4 Z" fill="url(#fg8)" stroke="#000" stroke-width="1.5"/></svg>
<div class="t" style="left:114.00px;top:513.42px;font-size:12.5px;line-height:12.5px;color:#666;">WFLTodoList (9)</div>
<div class="a" style="left:0px;top:534px;width:316px;height:35px;background:#ffffff;"></div>
<div class="a" style="left:54px;top:550px;width:9px;height:9px;background:#b6b6b6;border-radius:1.5px;"></div>
<div class="a" style="left:56px;top:554px;width:5px;height:1px;background:#fff;"></div>
<svg style="left:67px;top:544px" width="21" height="21" viewBox="0 0 21 21"><defs><linearGradient id="cg1" x1="0" y1="0" x2="1" y2="1"><stop offset="0" stop-color="#f4fbff"/><stop offset="1" stop-color="#b9ddf3"/></linearGradient></defs><rect x="1" y="0.5" width="19.5" height="19.5" fill="#fff" stroke="#b4aca4" stroke-width="1"/><rect x="3" y="2.8" width="15.5" height="15" fill="url(#cg1)" stroke="#c4c4c4" stroke-width="0.8"/><path d="M12.7,4.6 H9.8 Q7,5 7,9.3 Q7,13.6 9.8,14 H12.7" fill="none" stroke="#15202c" stroke-width="1.5"/></svg>
<div class="t" style="left:95.50px;top:548.42px;font-size:12.5px;line-height:12.5px;color:#666;">Content plug-ins</div>
<div class="a" style="left:0px;top:569px;width:316px;height:35px;background:#f7f7f7;"></div>
<div class="a" style="left:75px;top:585px;width:9px;height:9px;background:#b6b6b6;border-radius:1.5px;"></div>
<div class="a" style="left:77px;top:589px;width:5px;height:1px;background:#fff;"></div>
<div class="a" style="left:79px;top:587px;width:1px;height:5px;background:#fff;"></div>
<svg style="left:88px;top:578px" width="23" height="23" viewBox="0 0 23 23"><defs><linearGradient id="fg10" x1="0" y1="0" x2="0.4" y2="1"><stop offset="0" stop-color="#f0c45c"/><stop offset="1" stop-color="#fde9b8"/></linearGradient><linearGradient id="pg10" x1="0" y1="0" x2="0" y2="1"><stop offset="0" stop-color="#fff"/><stop offset="0.6" stop-color="#dfe2ff"/><stop offset="1" stop-color="#f4f4ff"/></linearGradient></defs><path d="M1.5,19 V2.8 H4.5" fill="#fff" stroke="#000" stroke-width="1.5"/><rect x="4.6" y="1.4" width="8" height="11.2" fill="url(#pg10)" stroke="#777" stroke-width="0.8"/><path d="M4.6,1.2 V12.8" stroke="#000" stroke-width="2"/><path d="M12.7,1.6 V12.6" stroke="#000" stroke-width="1.4"/><path d="M12.3,3.1 H18.2" stroke="#000" stroke-width="1.6"/><path d="M18.6,5.6 L21.6,5.6 M19.6,4.4 L19.6,6.8" stroke="#000" stroke-width="1.1"/><path d="M1,14.3 H6.6 V12.6 H12.7 V9.8 H17.4 Q18.2,9.8 18.2,10.6 V20.4 Q18.2,21.3 17.4,21.3 H1.8 Q1,21.3 1,20.4 Z" fill="url(#fg10)" stroke="#000" stroke-width="1.5"/></svg>
<div class="t" style="left:114.00px;top:583.42px;font-size:12.5px;line-height:12.5px;color:#666;">AssetVariations (2)</div>
<div class="a" style="left:0px;top:604px;width:316px;height:35px;background:#ffffff;"></div>
<div class="a" style="left:75px;top:620px;width:9px;height:9px;background:#b6b6b6;border-radius:1.5px;"></div>
<div class="a" style="left:77px;top:624px;width:5px;height:1px;background:#fff;"></div>
<div class="a" style="left:79px;top:622px;width:1px;height:5px;background:#fff;"></div>
<svg style="left:88px;top:613px" width="23" height="23" viewBox="0 0 23 23"><defs><linearGradient id="fg11" x1="0" y1="0" x2="0.4" y2="1"><stop offset="0" stop-color="#f0c45c"/><stop offset="1" stop-color="#fde9b8"/></linearGradient><linearGradient id="pg11" x1="0" y1="0" x2="0" y2="1"><stop offset="0" stop-color="#fff"/><stop offset="0.6" stop-color="#dfe2ff"/><stop offset="1" stop-color="#f4f4ff"/></linearGradient></defs><path d="M1.5,19 V2.8 H4.5" fill="#fff" stroke="#000" stroke-width="1.5"/><rect x="4.6" y="1.4" width="8" height="11.2" fill="url(#pg11)" stroke="#777" stroke-width="0.8"/><path d="M4.6,1.2 V12.8" stroke="#000" stroke-width="2"/><path d="M12.7,1.6 V12.6" stroke="#000" stroke-width="1.4"/><path d="M12.3,3.1 H18.2" stroke="#000" stroke-width="1.6"/><path d="M18.6,5.6 L21.6,5.6 M19.6,4.4 L19.6,6.8" stroke="#000" stroke-width="1.1"/><path d="M1,14.3 H6.6 V12.6 H12.7 V9.8 H17.4 Q18.2,9.8 18.2,10.6 V20.4 Q18.2,21.3 17.4,21.3 H1.8 Q1,21.3 1,20.4 Z" fill="url(#fg11)" stroke="#000" stroke-width="1.5"/></svg>
<div class="t" style="left:114.00px;top:618.42px;font-size:12.5px;line-height:12.5px;color:#666;">BrandManagementImageSelector (1)</div>
<div class="a" style="left:0px;top:639px;width:316px;height:35px;background:#f7f7f7;"></div>
<div class="a" style="left:75px;top:655px;width:9px;height:9px;background:#b6b6b6;border-radius:1.5px;"></div>
<div class="a" style="left:77px;top:659px;width:5px;height:1px;background:#fff;"></div>
<div class="a" style="left:79px;top:657px;width:1px;height:5px;background:#fff;"></div>
<svg style="left:88px;top:648px" width="23" height="23" viewBox="0 0 23 23"><defs><linearGradient id="fg12" x1="0" y1="0" x2="0.4" y2="1"><stop offset="0" stop-color="#f0c45c"/><stop offset="1" stop-color="#fde9b8"/></linearGradient><linearGradient id="pg12" x1="0" y1="0" x2="0" y2="1"><stop offset="0" stop-color="#fff"/><stop offset="0.6" stop-color="#dfe2ff"/><stop offset="1" stop-color="#f4f4ff"/></linearGradient></defs><path d="M1.5,19 V2.8 H4.5" fill="#fff" stroke="#000" stroke-width="1.5"/><rect x="4.6" y="1.4" width="8" height="11.2" fill="url(#pg12)" stroke="#777" stroke-width="0.8"/><path d="M4.6,1.2 V12.8" stroke="#000" stroke-width="2"/><path d="M12.7,1.6 V12.6" stroke="#000" stroke-width="1.4"/><path d="M12.3,3.1 H18.2" stroke="#000" stroke-width="1.6"/><path d="M18.6,5.6 L21.6,5.6 M19.6,4.4 L19.6,6.8" stroke="#000" stroke-width="1.1"/><path d="M1,14.3 H6.6 V12.6 H12.7 V9.8 H17.4 Q18.2,9.8 18.2,10.6 V20.4 Q18.2,21.3 17.4,21.3 H1.8 Q1,21.3 1,20.4 Z" fill="url(#fg12)" stroke="#000" stroke-width="1.5"/></svg>
<div class="t" style="left:114.00px;top:653.42px;font-size:12.5px;line-height:12.5px;color:#666;">BriefingView</div>
<div class="a" style="left:0px;top:674px;width:316px;height:35px;background:#ffffff;"></div>
<div class="a" style="left:75px;top:690px;width:9px;height:9px;background:#b6b6b6;border-radius:1.5px;"></div>
<div class="a" style="left:77px;top:694px;width:5px;height:1px;background:#fff;"></div>
<div class="a" style="left:79px;top:692px;width:1px;height:5px;background:#fff;"></div>
<svg style="left:88px;top:683px" width="23" height="23" viewBox="0 0 23 23"><defs><linearGradient id="fg13" x1="0" y1="0" x2="0.4" y2="1"><stop offset="0" stop-color="#f0c45c"/><stop offset="1" stop-color="#fde9b8"/></linearGradient><linearGradient id="pg13" x1="0" y1="0" x2="0" y2="1"><stop offset="0" stop-color="#fff"/><stop offset="0.6" stop-color="#dfe2ff"/><stop offset="1" stop-color="#f4f4ff"/></linearGradient></defs><path d="M1.5,19 V2.8 H4.5" fill="#fff" stroke="#000" stroke-width="1.5"/><rect x="4.6" y="1.4" width="8" height="11.2" fill="url(#pg13)" stroke="#777" stroke-width="0.8"/><path d="M4.6,1.2 V12.8" stroke="#000" stroke-width="2"/><path d="M12.7,1.6 V12.6" stroke="#000" stroke-width="1.4"/><path d="M12.3,3.1 H18.2" stroke="#000" stroke-width="1.6"/><path d="M18.6,5.6 L21.6,5.6 M19.6,4.4 L19.6,6.8" stroke="#000" stroke-width="1.1"/><path d="M1,14.3 H6.6 V12.6 H12.7 V9.8 H17.4 Q18.2,9.8 18.2,10.6 V20.4 Q18.2,21.3 17.4,21.3 H1.8 Q1,21.3 1,20.4 Z" fill="url(#fg13)" stroke="#000" stroke-width="1.5"/></svg>
<div class="t" style="left:114.00px;top:688.42px;font-size:12.5px;line-height:12.5px;color:#666;">CompareView</div>
<div class="a" style="left:0px;top:709px;width:316px;height:35px;background:#f7f7f7;"></div>
<div class="a" style="left:75px;top:725px;width:9px;height:9px;background:#b6b6b6;border-radius:1.5px;"></div>
<div class="a" style="left:77px;top:729px;width:5px;height:1px;background:#fff;"></div>
<svg style="left:88px;top:718px" width="23" height="23" viewBox="0 0 23 23"><defs><linearGradient id="fg14" x1="0" y1="0" x2="0.4" y2="1"><stop offset="0" stop-color="#f0c45c"/><stop offset="1" stop-color="#fde9b8"/></linearGradient><linearGradient id="pg14" x1="0" y1="0" x2="0" y2="1"><stop offset="0" stop-color="#fff"/><stop offset="0.6" stop-color="#dfe2ff"/><stop offset="1" stop-color="#f4f4ff"/></linearGradient></defs><path d="M1.5,19 V2.8 H4.5" fill="#fff" stroke="#000" stroke-width="1.5"/><rect x="4.6" y="1.4" width="8" height="11.2" fill="url(#pg14)" stroke="#777" stroke-width="0.8"/><path d="M4.6,1.2 V12.8" stroke="#000" stroke-width="2"/><path d="M12.7,1.6 V12.6" stroke="#000" stroke-width="1.4"/><path d="M12.3,3.1 H18.2" stroke="#000" stroke-width="1.6"/><path d="M18.6,5.6 L21.6,5.6 M19.6,4.4 L19.6,6.8" stroke="#000" stroke-width="1.1"/><path d="M1,14.3 H6.6 V12.6 H12.7 V9.8 H17.4 Q18.2,9.8 18.2,10.6 V20.4 Q18.2,21.3 17.4,21.3 H1.8 Q1,21.3 1,20.4 Z" fill="url(#fg14)" stroke="#000" stroke-width="1.5"/></svg>
<div class="t" style="left:114.00px;top:723.42px;font-size:12.5px;line-height:12.5px;color:#666;">DiverterDataset (1)</div>
<div class="a" style="left:0px;top:744px;width:316px;height:35px;background:#cccccc;"></div>
<svg style="left:111px;top:755px" width="17" height="17" viewBox="0 0 17 17"><path d="M3.8,5.2 L12,12.3" stroke="#262626" stroke-width="1.7"/><circle cx="1.9" cy="3.7" r="1.1" fill="#222"/><path d="M4.8,1 L4.9,5.2" stroke="#111" stroke-width="1.4"/><path d="M11.5,12 L15.8,11.6" stroke="#222" stroke-width="1.3"/><rect x="10.8" y="12" width="2.8" height="3.2" fill="#111"/></svg>
<div class="t" style="left:135.3px;top:758.42px;width:179px;overflow:hidden;font-size:12.5px;line-height:12.5px;color:#333;">C.DiverterDataset.PIM2.Attributes</div>
<div class="a" style="left:0px;top:779px;width:316px;height:35px;background:#f7f7f7;"></div>
<div class="a" style="left:75px;top:795px;width:9px;height:9px;background:#b6b6b6;border-radius:1.5px;"></div>
<div class="a" style="left:77px;top:799px;width:5px;height:1px;background:#fff;"></div>
<div class="a" style="left:79px;top:797px;width:1px;height:5px;background:#fff;"></div>
<svg style="left:88px;top:788px" width="23" height="23" viewBox="0 0 23 23"><defs><linearGradient id="fg16" x1="0" y1="0" x2="0.4" y2="1"><stop offset="0" stop-color="#f0c45c"/><stop offset="1" stop-color="#fde9b8"/></linearGradient><linearGradient id="pg16" x1="0" y1="0" x2="0" y2="1"><stop offset="0" stop-color="#fff"/><stop offset="0.6" stop-color="#dfe2ff"/><stop offset="1" stop-color="#f4f4ff"/></linearGradient></defs><path d="M1.5,19 V2.8 H4.5" fill="#fff" stroke="#000" stroke-width="1.5"/><rect x="4.6" y="1.4" width="8" height="11.2" fill="url(#pg16)" stroke="#777" stroke-width="0.8"/><path d="M4.6,1.2 V12.8" stroke="#000" stroke-width="2"/><path d="M12.7,1.6 V12.6" stroke="#000" stroke-width="1.4"/><path d="M12.3,3.1 H18.2" stroke="#000" stroke-width="1.6"/><path d="M18.6,5.6 L21.6,5.6 M19.6,4.4 L19.6,6.8" stroke="#000" stroke-width="1.1"/><path d="M1,14.3 H6.6 V12.6 H12.7 V9.8 H17.4 Q18.2,9.8 18.2,10.6 V20.4 Q18.2,21.3 17.4,21.3 H1.8 Q1,21.3 1,20.4 Z" fill="url(#fg16)" stroke="#000" stroke-width="1.5"/></svg>
<div class="t" style="left:114.00px;top:793.42px;font-size:12.5px;line-height:12.5px;color:#666;">DocEditLeftArea (1)</div>
<div class="a" style="left:0px;top:814px;width:316px;height:35px;background:#ffffff;"></div>
<div class="a" style="left:75px;top:830px;width:9px;height:9px;background:#b6b6b6;border-radius:1.5px;"></div>
<div class="a" style="left:77px;top:834px;width:5px;height:1px;background:#fff;"></div>
<div class="a" style="left:79px;top:832px;width:1px;height:5px;background:#fff;"></div>
<svg style="left:88px;top:823px" width="23" height="23" viewBox="0 0 23 23"><defs><linearGradient id="fg17" x1="0" y1="0" x2="0.4" y2="1"><stop offset="0" stop-color="#f0c45c"/><stop offset="1" stop-color="#fde9b8"/></linearGradient><linearGradient id="pg17" x1="0" y1="0" x2="0" y2="1"><stop offset="0" stop-color="#fff"/><stop offset="0.6" stop-color="#dfe2ff"/><stop offset="1" stop-color="#f4f4ff"/></linearGradient></defs><path d="M1.5,19 V2.8 H4.5" fill="#fff" stroke="#000" stroke-width="1.5"/><rect x="4.6" y="1.4" width="8" height="11.2" fill="url(#pg17)" stroke="#777" stroke-width="0.8"/><path d="M4.6,1.2 V12.8" stroke="#000" stroke-width="2"/><path d="M12.7,1.6 V12.6" stroke="#000" stroke-width="1.4"/><path d="M12.3,3.1 H18.2" stroke="#000" stroke-width="1.6"/><path d="M18.6,5.6 L21.6,5.6 M19.6,4.4 L19.6,6.8" stroke="#000" stroke-width="1.1"/><path d="M1,14.3 H6.6 V12.6 H12.7 V9.8 H17.4 Q18.2,9.8 18.2,10.6 V20.4 Q18.2,21.3 17.4,21.3 H1.8 Q1,21.3 1,20.4 Z" fill="url(#fg17)" stroke="#000" stroke-width="1.5"/></svg>
<div class="t" style="left:114.00px;top:828.42px;font-size:12.5px;line-height:12.5px;color:#666;">Flatplan</div>
<div class="a" style="left:0px;top:849px;width:316px;height:35px;background:#f7f7f7;"></div>
<div class="a" style="left:75px;top:865px;width:9px;height:9px;background:#b6b6b6;border-radius:1.5px;"></div>
<div class="a" style="left:77px;top:869px;width:5px;height:1px;background:#fff;"></div>
<div class="a" style="left:79px;top:867px;width:1px;height:5px;background:#fff;"></div>
<svg style="left:88px;top:858px" width="23" height="23" viewBox="0 0 23 23"><defs><linearGradient id="fg18" x1="0" y1="0" x2="0.4" y2="1"><stop offset="0" stop-color="#f0c45c"/><stop offset="1" stop-color="#fde9b8"/></linearGradient><linearGradient id="pg18" x1="0" y1="0" x2="0" y2="1"><stop offset="0" stop-color="#fff"/><stop offset="0.6" stop-color="#dfe2ff"/><stop offset="1" stop-color="#f4f4ff"/></linearGradient></defs><path d="M1.5,19 V2.8 H4.5" fill="#fff" stroke="#000" stroke-width="1.5"/><rect x="4.6" y="1.4" width="8" height="11.2" fill="url(#pg18)" stroke="#777" stroke-width="0.8"/><path d="M4.6,1.2 V12.8" stroke="#000" stroke-width="2"/><path d="M12.7,1.6 V12.6" stroke="#000" stroke-width="1.4"/><path d="M12.3,3.1 H18.2" stroke="#000" stroke-width="1.6"/><path d="M18.6,5.6 L21.6,5.6 M19.6,4.4 L19.6,6.8" stroke="#000" stroke-width="1.1"/><path d="M1,14.3 H6.6 V12.6 H12.7 V9.8 H17.4 Q18.2,9.8 18.2,10.6 V20.4 Q18.2,21.3 17.4,21.3 H1.8 Q1,21.3 1,20.4 Z" fill="url(#fg18)" stroke="#000" stroke-width="1.5"/></svg>
<div class="t" style="left:114.00px;top:863.42px;font-size:12.5px;line-height:12.5px;color:#666;">FSCoverFlow (1)</div>
<div class="a" style="left:316px;top:218px;width:19px;height:654px;background:#fff;border-left:1px solid #b8b8b8;border-right:1px solid #b8b8b8;"></div>
<div class="a" style="left:316px;top:218px;width:19px;height:18px;background:#fff;border:1px solid #b8b8b8;"></div>
<svg style="left:320px;top:223px" width="12" height="8"><polygon points="1.10,6.90 10.10,6.90 5.60,1.90" fill="#a8a8a8"/></svg>
<div class="a" style="left:318px;top:398px;width:16px;height:53px;background:#dcdcdc;"></div>
<div class="a" style="left:321px;top:420px;width:7px;height:1px;background:#9a7f86;"></div>
<div class="a" style="left:321px;top:422px;width:7px;height:1px;background:#8a8a8a;"></div>
<div class="a" style="left:321px;top:425px;width:7px;height:1px;background:#8a8a8a;"></div>
<div class="a" style="left:321px;top:427px;width:7px;height:1px;background:#8a8a8a;"></div>
<div class="a" style="left:316px;top:857px;width:19px;height:15px;background:#fff;border:1px solid #b8b8b8;border-bottom:none;"></div>
<svg style="left:320px;top:862px" width="12" height="8"><polygon points="1.10,1.00 10.10,1.00 5.60,6.00" fill="#a8a8a8"/></svg>
<div class="a" style="left:339px;top:491px;width:1px;height:20px;background:#9a9a9a;"></div>
<div class="a" style="left:342px;top:491px;width:1px;height:20px;background:#9a9a9a;"></div>
<div class="a" style="left:344px;top:491px;width:1px;height:20px;background:#9a9a9a;"></div>
<div class="a" style="left:356px;top:146px;width:1555px;height:35px;background:#f0f0f0;"></div>
<div class="t" style="left:912.70px;top:149.84px;font-size:25px;line-height:25px;font-weight:bold;color:#3f3f3f;">Plug-in configuration: DiverterDataset</div>
<div class="a" style="left:356px;top:188px;width:1555px;height:35px;background:#f7f7f7;"></div>
<div class="t" style="left:363.70px;top:200.45px;font-size:14px;line-height:14px;font-weight:bold;color:#4a4a4a;">Configuration identifier</div>
<div class="a" style="left:537px;top:196px;width:1368px;height:27px;background:#fff;border:1px solid #d0d0d0;border-top:2px solid #8f8f8f;border-bottom:none;"></div>
<div class="t" style="left:541.40px;top:201.82px;font-size:12.5px;line-height:12.5px;color:#666;">C.DiverterDataset.PIM2.Attributes</div>
<div class="a" style="left:356px;top:257px;width:1555px;height:570px;background:#fff;"></div>
<div class="a" style="left:356px;top:231px;width:140px;height:26px;background:#fff;border:1px solid #c0c0c0;border-radius:4px 4px 0 0;"></div>
<div class="t" style="left:373.20px;top:235.35px;font-size:14px;line-height:14px;font-weight:bold;color:#4a4a4a;">General settings</div>
<div class="a" style="left:495px;top:231px;width:122px;height:26px;background:linear-gradient(#f6f6f6,#fff 60%);border:1px solid #c0c0c0;border-bottom:none;border-radius:4px 4px 0 0;"></div>
<div class="t" style="left:512.40px;top:236.35px;font-size:14px;line-height:14px;font-weight:bold;color:#4a4a4a;">Table content</div>
<div class="a" style="left:616px;top:231px;width:136px;height:26px;background:#fff;border:1px solid #c0c0c0;border-radius:4px 4px 0 0;"></div>
<div class="t" style="left:634.00px;top:235.35px;font-size:14px;line-height:14px;font-weight:bold;color:#4a4a4a;">Dataset content</div>
<div class="a" style="left:751px;top:231px;width:155px;height:26px;background:#fff;border:1px solid #c0c0c0;border-radius:4px 4px 0 0;"></div>
<div class="t" style="left:768.40px;top:235.35px;font-size:14px;line-height:14px;font-weight:bold;color:#4a4a4a;">Comet information</div>
<div class="a" style="left:905px;top:231px;width:147px;height:26px;background:#fff;border:1px solid #c0c0c0;border-radius:4px 4px 0 0;"></div>
<div class="t" style="left:922.50px;top:235.35px;font-size:14px;line-height:14px;font-weight:bold;color:#4a4a4a;">Email notification</div>
<div class="a" style="left:1051px;top:231px;width:164px;height:26px;background:#fff;border:1px solid #c0c0c0;border-radius:4px 4px 0 0;"></div>
<div class="t" style="left:1068.10px;top:235.35px;font-size:14px;line-height:14px;font-weight:bold;color:#4a4a4a;">Access Restrictions</div>
<div class="a" style="left:1214px;top:231px;width:98px;height:26px;background:#fff;border:1px solid #c0c0c0;border-radius:4px 4px 0 0;"></div>
<div class="t" style="left:1230.60px;top:235.35px;font-size:14px;line-height:14px;font-weight:bold;color:#4a4a4a;">Functions</div>
<div class="t" style="left:364.70px;top:275.15px;font-size:14px;line-height:14px;font-weight:bold;color:#4a4a4a;">Column visibility enabled</div>
<div class="a" style="left:550px;top:272px;width:18px;height:18px;background:#fff;border:1px solid #ababab;border-left-color:#7c7c7c;border-top-color:#7c7c7c;border-radius:1.5px;"></div>
<svg style="left:550.2px;top:272.2px" width="18" height="18" viewBox="0 0 18 18"><path d="M3.6,8.4 L6.3,13.4" fill="none" stroke="#6a6a6a" stroke-width="2.6" stroke-linecap="round"/><path d="M6.3,13.4 L13.9,2.6" fill="none" stroke="#6a6a6a" stroke-width="1.9" stroke-linecap="round"/></svg>
<div class="t" style="left:583.20px;top:275.15px;font-size:14px;line-height:14px;font-weight:bold;color:#4a4a4a;">Select All enabled</div>
<div class="a" style="left:719px;top:272px;width:18px;height:18px;background:#fff;border:1px solid #ababab;border-left-color:#7c7c7c;border-top-color:#7c7c7c;border-radius:1.5px;"></div>
<svg style="left:719px;top:272.2px" width="18" height="18" viewBox="0 0 18 18"><path d="M3.6,8.4 L6.3,13.4" fill="none" stroke="#6a6a6a" stroke-width="2.6" stroke-linecap="round"/><path d="M6.3,13.4 L13.9,2.6" fill="none" stroke="#6a6a6a" stroke-width="1.9" stroke-linecap="round"/></svg>
<div class="t" style="left:750.90px;top:275.15px;font-size:14px;line-height:14px;font-weight:bold;color:#4a4a4a;">Indesign template</div>
<div class="a" style="left:888px;top:272px;width:17px;height:18px;background:#fff;border:1px solid #ababab;border-left-color:#7c7c7c;border-top-color:#7c7c7c;border-radius:1.5px;"></div>
<div class="t" style="left:920.00px;top:275.15px;font-size:14px;line-height:14px;font-weight:bold;color:#4a4a4a;">Quark template</div>
<div class="a" style="left:1038px;top:272px;width:17px;height:18px;background:#fff;border:1px solid #ababab;border-left-color:#7c7c7c;border-top-color:#7c7c7c;border-radius:1.5px;"></div>
<div class="t" style="left:1070.45px;top:275.15px;font-size:14px;line-height:14px;font-weight:bold;color:#4a4a4a;">Edit PEO enabled</div>
<div class="a" style="left:1201px;top:272px;width:18px;height:18px;background:#fff;border:1px solid #ababab;border-left-color:#7c7c7c;border-top-color:#7c7c7c;border-radius:1.5px;"></div>
<svg style="left:1201.25px;top:272.2px" width="18" height="18" viewBox="0 0 18 18"><path d="M3.6,8.4 L6.3,13.4" fill="none" stroke="#6a6a6a" stroke-width="2.6" stroke-linecap="round"/><path d="M6.3,13.4 L13.9,2.6" fill="none" stroke="#6a6a6a" stroke-width="1.9" stroke-linecap="round"/></svg>
<div class="t" style="left:1235.80px;top:275.15px;font-size:14px;line-height:14px;font-weight:bold;color:#4a4a4a;">Sort PEOs descending</div>
<div class="a" style="left:1401px;top:272px;width:18px;height:18px;background:#fff;border:1px solid #ababab;border-left-color:#7c7c7c;border-top-color:#7c7c7c;border-radius:1.5px;"></div>
<div class="t" style="left:1432.90px;top:275.15px;font-size:14px;line-height:14px;font-weight:bold;color:#4a4a4a;">Hide object name column</div>
<div class="a" style="left:1620px;top:272px;width:18px;height:18px;background:#fff;border:1px solid #ababab;border-left-color:#7c7c7c;border-top-color:#7c7c7c;border-radius:1.5px;"></div>
<div class="a" style="left:1059px;top:257px;width:174px;height:50px;border:3px solid #d20000;"></div>
<div class="a" style="left:1067px;top:270px;width:153px;height:27px;border:1px solid #2a2aff;"></div>
<div class="t" style="left:357.90px;top:310.35px;font-size:14px;line-height:14px;font-weight:bold;color:#4a4a4a;">Object type</div>
<div class="a" style="left:449px;top:305px;width:187px;height:28px;background:#fff;border:1px solid #bdbdbd;"></div>
<div class="a" style="left:610px;top:305px;width:1px;height:28px;background:#bdbdbd;"></div>
<svg style="left:616px;top:315px" width="12" height="8"><polygon points="1.20,1.70 10.20,1.70 5.70,6.70" fill="#000"/></svg>
<div class="t" style="left:453.40px;top:311.45px;font-size:14px;line-height:14px;color:#666;">Pim2Product</div>
<div class="t" style="left:365.00px;top:346.25px;font-size:14px;line-height:14px;color:#666;">Name</div>
<div class="a" style="left:356px;top:368px;width:300px;height:1px;background:#d4d4d4;"></div>
<div class="a" style="left:356px;top:369px;width:300px;height:29px;background:#f5f5f5;"></div>
<div class="t" style="left:364.50px;top:374.75px;font-size:14px;line-height:14px;color:#666;">Template identity</div>
<div class="a" style="left:356px;top:398px;width:300px;height:29px;background:#fff;"></div>
<div class="t" style="left:364.50px;top:403.72px;font-size:14px;line-height:14px;color:#666;">Identity</div>
<div class="a" style="left:356px;top:427px;width:300px;height:29px;background:#f5f5f5;"></div>
<div class="t" style="left:364.50px;top:432.69px;font-size:14px;line-height:14px;color:#666;">Product identity</div>
<div class="a" style="left:356px;top:456px;width:300px;height:29px;background:#fff;"></div>
<div class="t" style="left:364.50px;top:461.66px;font-size:14px;line-height:14px;color:#666;">Preview</div>
<div class="a" style="left:356px;top:485px;width:300px;height:29px;background:#f5f5f5;"></div>
<div class="t" style="left:364.50px;top:490.63px;font-size:14px;line-height:14px;color:#666;">Product classification path</div>
<div class="a" style="left:356px;top:514px;width:300px;height:29px;background:#c8c8c8;"></div>
<div class="t" style="left:364.50px;top:519.60px;font-size:14px;line-height:14px;color:#333;">Title</div>
<div class="a" style="left:356px;top:543px;width:300px;height:29px;background:#f5f5f5;"></div>
<div class="a" style="left:356px;top:572px;width:300px;height:29px;background:#fff;"></div>
<div class="a" style="left:356px;top:601px;width:300px;height:29px;background:#f5f5f5;"></div>
<div class="a" style="left:356px;top:630px;width:300px;height:29px;background:#fff;"></div>
<div class="a" style="left:356px;top:659px;width:300px;height:29px;background:#f5f5f5;"></div>
<div class="a" style="left:356px;top:688px;width:300px;height:29px;background:#fff;"></div>
<div class="a" style="left:356px;top:716px;width:300px;height:1px;background:#f0f0f0;"></div>
<div class="a" style="left:660px;top:557px;width:1px;height:20px;background:#a0a0a0;"></div>
<div class="a" style="left:663px;top:557px;width:1px;height:20px;background:#a0a0a0;"></div>
<div class="a" style="left:665px;top:557px;width:1px;height:20px;background:#a0a0a0;"></div>
<div class="a" style="left:357px;top:724px;width:27px;height:28px;background:#fff;border:1px solid #bcbcbc;"></div>
<svg style="left:364px;top:729px" width="12" height="16" viewBox="0 0 12 16"><path d="M6,0.5 L11,6.5 H8 V15 H4 V6.5 H1 Z" fill="#000"/></svg>
<div class="a" style="left:394px;top:724px;width:27px;height:28px;background:#fff;border:1px solid #bcbcbc;"></div>
<svg style="left:401px;top:729px" width="12" height="16" viewBox="0 0 12 16"><path d="M6,15.5 L11,9.5 H8 V1 H4 V9.5 H1 Z" fill="#000"/></svg>
<div class="a" style="left:480px;top:724px;width:80px;height:28px;background:#fff;border:1px solid #bcbcbc;"></div>
<div class="t" style="left:507.50px;top:729.95px;font-size:14px;line-height:14px;font-weight:bold;color:#4a4a4a;">Add</div>
<div class="a" style="left:570px;top:724px;width:86px;height:28px;background:#fff;border:1px solid #bcbcbc;"></div>
<div class="t" style="left:587.30px;top:729.95px;font-size:14px;line-height:14px;font-weight:bold;color:#4a4a4a;">Remove</div>
<div class="t" style="left:357.50px;top:771.55px;font-size:14px;line-height:14px;font-weight:bold;color:#4a4a4a;">Max reference type placeholders</div>
<div class="a" style="left:590px;top:767px;width:47px;height:28px;background:#fff;border:1px solid #ff66ff;border-top-color:#c040c0;"></div>
<div class="t" style="left:595.60px;top:771.55px;font-size:14px;line-height:14px;color:#666;">0</div>
<div class="a" style="left:637px;top:767px;width:19px;height:28px;background:#fff;border-top:1px solid #eee;border-bottom:1px solid #eee;"></div>
<div class="a" style="left:637px;top:781px;width:19px;height:1px;background:#eee;"></div>
<svg style="left:642px;top:770px" width="12" height="8"><polygon points="1.70,6.30 10.70,6.30 6.20,1.30" fill="#000"/></svg>
<svg style="left:642px;top:783px" width="12" height="8"><polygon points="1.70,1.10 10.70,1.10 6.20,6.10" fill="#000"/></svg>
<div class="a" style="left:356px;top:808px;width:300px;height:18px;background:#fff;border:1px solid #b8b8b8;"></div>
<div class="a" style="left:374px;top:809px;width:261px;height:16px;background:#dddddd;border-left:1px solid #c0c0c0;"></div>
<div class="a" style="left:640px;top:809px;width:1px;height:16px;background:#c0c0c0;"></div>
<svg style="left:362px;top:811px" width="8" height="12"><polygon points="6.00,1.60 6.00,10.60 1.00,6.10" fill="#a8a8a8"/></svg>
<svg style="left:644px;top:811px" width="8" height="12"><polygon points="1.50,1.60 1.50,10.60 6.50,6.10" fill="#a8a8a8"/></svg>
<div class="a" style="left:500px;top:813px;width:1px;height:7px;background:#8a6f76;"></div>
<div class="a" style="left:502px;top:813px;width:1px;height:7px;background:#7a7a7a;"></div>
<div class="a" style="left:505px;top:813px;width:1px;height:7px;background:#7a7a7a;"></div>
<div class="a" style="left:507px;top:813px;width:1px;height:7px;background:#7a7a7a;"></div>
<div class="t" style="left:682.90px;top:322.95px;font-size:14px;line-height:14px;font-weight:bold;color:#4a4a4a;">Name</div>
<div class="t" style="left:682.90px;top:367.85px;font-size:14px;line-height:14px;font-weight:bold;color:#4a4a4a;">Label</div>
<div class="t" style="left:682.90px;top:413.15px;font-size:14px;line-height:14px;font-weight:bold;color:#4a4a4a;">Expression</div>
<div class="t" style="left:682.90px;top:458.05px;font-size:14px;line-height:14px;font-weight:bold;color:#4a4a4a;">Width</div>
<div class="t" style="left:682.90px;top:503.05px;font-size:14px;line-height:14px;font-weight:bold;color:#4a4a4a;">Align</div>
<div class="a" style="left:819px;top:318px;width:1080px;height:29px;background:#fff;border:1px solid #dcdcdc;border-top:2px solid #a5a5a5;"></div>
<div class="t" style="left:823.40px;top:323.85px;font-size:14px;line-height:14px;color:#666;">Title</div>
<div class="a" style="left:819px;top:364px;width:1080px;height:28px;background:#fff;border:1px solid #dcdcdc;border-top:2px solid #a5a5a5;"></div>
<div class="t" style="left:823.40px;top:368.85px;font-size:14px;line-height:14px;color:#666;">Title</div>
<div class="a" style="left:819px;top:409px;width:1038px;height:30px;background:#fff;border:1px solid #bdbdbd;"></div>
<div class="a" style="left:1834px;top:409px;width:1px;height:30px;background:#bdbdbd;"></div>
<svg style="left:1838px;top:420px" width="12" height="8"><polygon points="1.70,1.30 10.70,1.30 6.20,6.30" fill="#000"/></svg>
<div class="t" style="left:821.80px;top:415.65px;font-size:14px;line-height:14px;color:#666;">Title</div>
<div class="a" style="left:1868px;top:409px;width:31px;height:30px;background:#fff;border:1px solid #bdbdbd;"></div>
<div class="a" style="left:819px;top:454px;width:1057px;height:28px;background:#fff;border:1px solid #ff66ff;border-top-color:#c050c0;"></div>
<div class="t" style="left:824.20px;top:459.75px;font-size:14px;line-height:14px;color:#666;">100</div>
<div class="a" style="left:1876px;top:454px;width:22px;height:28px;background:#fff;border:1px solid #eee;border-left:none;"></div>
<div class="a" style="left:1876px;top:468px;width:22px;height:1px;background:#eee;"></div>
<svg style="left:1881px;top:457px" width="12" height="8"><polygon points="1.50,6.00 10.50,6.00 6.00,1.00" fill="#000"/></svg>
<svg style="left:1881px;top:470px" width="12" height="8"><polygon points="1.50,1.80 10.50,1.80 6.00,6.80" fill="#000"/></svg>
<div class="a" style="left:819px;top:499px;width:1080px;height:28px;background:#fff;border:1px solid #bdbdbd;"></div>
<div class="a" style="left:1872px;top:499px;width:1px;height:28px;background:#bdbdbd;"></div>
<svg style="left:1878px;top:509px" width="12" height="8"><polygon points="1.80,1.80 10.80,1.80 6.30,6.80" fill="#000"/></svg>
<div class="t" style="left:824.50px;top:506.05px;font-size:14px;line-height:14px;color:#666;">Left</div>
<div class="a" style="left:681px;top:542px;width:18px;height:18px;background:#fff;border:1px solid #ababab;border-left-color:#7c7c7c;border-top-color:#7c7c7c;border-radius:1.5px;"></div>
<svg style="left:681.3px;top:542.4px" width="18" height="18" viewBox="0 0 18 18"><path d="M3.6,8.4 L6.3,13.4" fill="none" stroke="#6a6a6a" stroke-width="2.6" stroke-linecap="round"/><path d="M6.3,13.4 L13.9,2.6" fill="none" stroke="#6a6a6a" stroke-width="1.9" stroke-linecap="round"/></svg>
<div class="t" style="left:700.60px;top:541.85px;font-size:14px;line-height:14px;font-weight:bold;color:#4a4a4a;">Visible by default</div>
<div class="a" style="left:356px;top:847px;width:145px;height:33px;background:#fff;border:1px solid #bcbcbc;"></div>
<div class="t" style="left:373.10px;top:853.22px;font-size:12.5px;line-height:12.5px;font-weight:bold;color:#4a4a4a;">Save configuration</div>
<div class="a" style="left:511px;top:847px;width:165px;height:33px;background:#fff;border:1px solid #bcbcbc;"></div>
<div class="t" style="left:528.20px;top:853.22px;font-size:12.5px;line-height:12.5px;font-weight:bold;color:#4a4a4a;">Remove configuration</div>
</body></html>
